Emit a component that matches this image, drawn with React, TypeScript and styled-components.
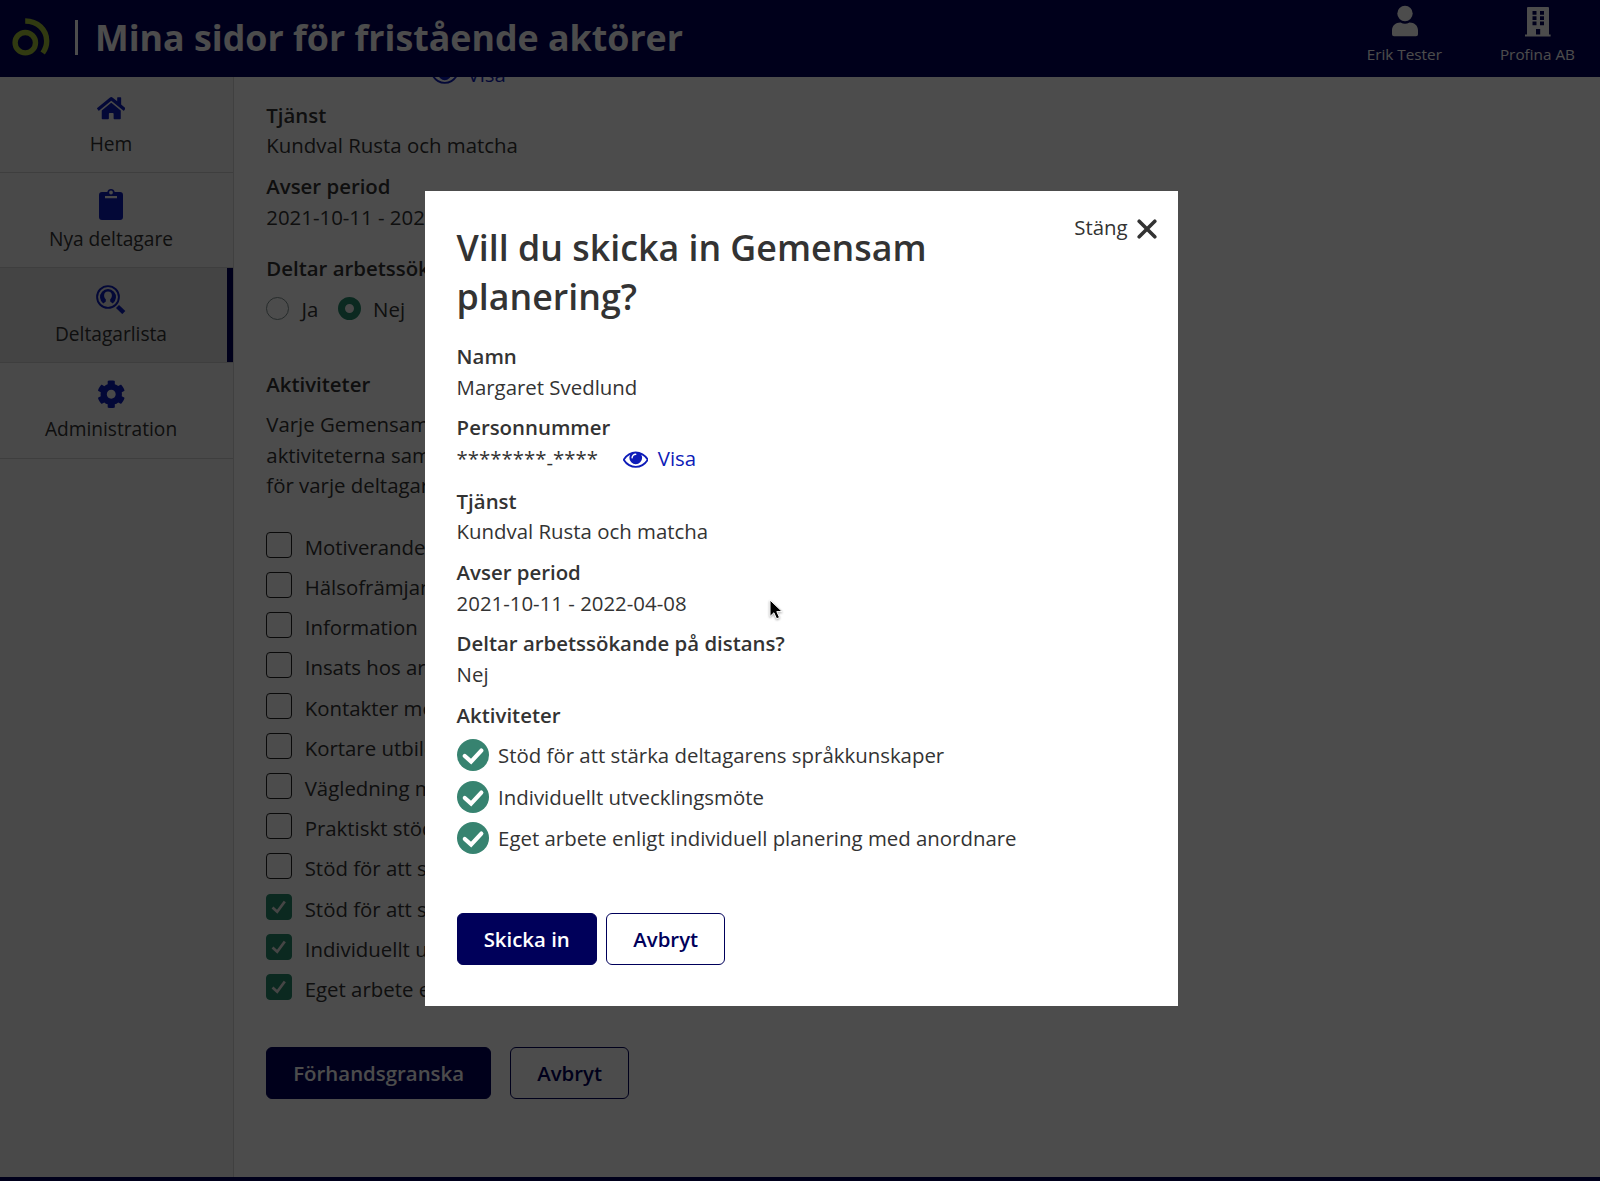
import React from "react";
import styled, { createGlobalStyle, css } from "styled-components";
import { FaHome, FaCog } from "react-icons/fa";

const GlobalStyle = createGlobalStyle`
  *, *::before, *::after { box-sizing: border-box; }
  html, body { margin: 0; padding: 0; }
  body {
    font-family: "Open Sans", "Noto Sans", sans-serif;
    font-size: 20.4px;
    line-height: 30.6px;
    color: #333;
    overflow: hidden;
  }
  h1, h2, h3, p, ul { margin: 0; padding: 0; }
  ul { list-style: none; }
  button { font: inherit; color: inherit; cursor: pointer; margin: 0; }
`;

const navy = "#00005a";
const link = "#0d1bb8";
const green = "#378370";
const formGreen = "#268a6b";

const Page = styled.div`
  position: relative;
  display: flex;
  flex-direction: column;
  height: 1181px;
  background: #fff;
  overflow: hidden;
`;

const Header = styled.header`
  position: relative;
  z-index: 1;
  flex: none;
  display: flex;
  align-items: flex-start;
  height: 77px;
  padding: 0 25px 0 12px;
  background: ${navy};
  color: #fff;
`;

const LogoSvg = styled.svg`
  width: 38px;
  height: 38px;
  margin-top: 18px;
`;

const Divider = styled.span`
  width: 3px;
  height: 35px;
  margin: 20px 17.5px 0 24.5px;
  background: #fff;
`;

const SiteTitle = styled.h1`
  flex: 1;
  margin-top: 10px;
  font-size: 35.75px;
  line-height: 54px;
  font-weight: 700;
  white-space: nowrap;
`;

const HeaderLinks = styled.div`
  display: flex;
  gap: 58px;
  padding-top: 5px;
`;

const HeaderLink = styled.a`
  display: flex;
  flex-direction: column;
  align-items: center;
  gap: 6px;
  font-size: 15.3px;
  line-height: 22px;
  white-space: nowrap;
  svg { width: 34px; height: 34px; display: block; margin: 0 0 -2px 1px; }
`;

const Body = styled.div`
  flex: 1;
  min-height: 0;
  display: flex;
`;

const Sidebar = styled.nav`
  flex: none;
  width: 234px;
  padding-top: 0.6px;
  background: #f4f4f4;
  border-right: 1px solid #d8d8d8;
`;

const NavItem = styled.a<{ $active?: boolean }>`
  display: flex;
  flex-direction: column;
  align-items: center;
  height: 95.3px;
  padding: 15px 11px 0 0;
  border-bottom: 1px solid #cfcfcf;
  background: ${(p) => (p.$active ? "#e3e3e3" : "transparent")};
  box-shadow: ${(p) => (p.$active ? `inset -6px 0 0 ${navy}` : "none")};
  font-size: 19.15px;
`;

const NavIcon = styled.span`
  display: flex;
  align-items: center;
  justify-content: center;
  height: 32px;
  margin-bottom: 4px;
  color: ${link};
`;

const Main = styled.main`
  flex: 1;
  min-width: 0;
  padding-left: 32.3px;
  overflow: hidden;
`;

const Form = styled.div`
  margin-top: -18.2px;
`;

const Field = styled.div`
  margin-bottom: 10.1px;
`;

const NumberField = styled.div`
  display: flex;
  height: 32.6px;
  margin-bottom: 8.4px;
  padding-left: 166.2px;
`;

const Label = styled.h3`
  font-size: inherit;
  line-height: inherit;
  font-weight: 600;
`;

const MaskedRow = styled.div`
  display: flex;
  height: 32.6px;
`;

const Stars = styled.span`
  width: 166.2px;
`;

const LowDash = styled.span`
  line-height: 0;
  vertical-align: -4px;
`;

const ShowLink = styled.span`
  display: flex;
  gap: 9.5px;
  color: ${link};
  svg { width: 25.5px; height: 25.5px; margin-top: 2.8px; }
`;

const RadioRow = styled.div`
  display: flex;
  margin: 9.8px 0 45px;
`;

const RadioSection = styled.div`
  padding-top: 10.8px;
`;

const RadioLabel = styled.label<{ $width: number }>`
  display: flex;
  align-items: flex-start;
  gap: 12.3px;
  width: ${(p) => p.$width}px;
`;

const Radio = styled.span<{ $on?: boolean }>`
  flex: none;
  width: 23px;
  height: 23px;
  margin-top: 3.2px;
  border-radius: 50%;
  ${(p) =>
    p.$on
      ? css`border: 7.5px solid ${formGreen}; background: #f2f2f2;`
      : css`border: 1.3px solid #7f8f8f;`}
`;

const Intro = styled.p`
  margin: 9.4px 0 30.7px;
`;

const CheckList = styled.ul`
  display: flex;
  flex-direction: column;
  gap: 9.65px;
`;

const CheckRow = styled.li`
  display: flex;
  gap: 12.4px;
  height: 30.6px;
  white-space: nowrap;
`;

const Box = styled.span<{ $on?: boolean }>`
  flex: none;
  width: 26px;
  height: 26px;
  margin-top: 0;
  border-radius: 4px;
  border: 1.4px solid ${(p) => (p.$on ? formGreen : "#222")};
  background: ${(p) => (p.$on ? formGreen : "transparent")};
  svg { display: block; width: 26px; height: 26px; margin: -1px; }
`;

const Buttons = styled.div<{ $gap: number; $top: number }>`
  display: flex;
  gap: ${(p) => p.$gap}px;
  margin-top: ${(p) => p.$top}px;
`;

const Button = styled.button<{ $primary?: boolean; $width: number }>`
  width: ${(p) => p.$width}px;
  height: 52.4px;
  padding: 1px 0 0;
  border: 1.3px solid ${navy};
  border-radius: 6px;
  background: ${(p) => (p.$primary ? navy : "transparent")};
  color: ${(p) => (p.$primary ? "#fff" : navy)};
  font-weight: 600;
`;

const Footer = styled.footer`
  flex: none;
  height: 3.7px;
  background: ${navy};
`;

const Overlay = styled.div`
  position: absolute;
  inset: 0;
  z-index: 2;
  padding: 191px 0 0 424.5px;
  background: rgba(0, 0, 0, 0.7);
`;

const Dialog = styled.section`
  width: 753.3px;
  height: 814.5px;
  padding: 32.3px 21.2px 0 32.1px;
  background: #fff;
`;

const DialogHead = styled.div`
  display: flex;
  justify-content: space-between;
  align-items: flex-start;
  margin-bottom: 20.5px;
`;

const DialogTitle = styled.h2`
  font-size: 35.75px;
  line-height: 48.65px;
  font-weight: 600;
`;

const Close = styled.button`
  display: flex;
  align-items: center;
  gap: 9px;
  margin-top: -11px;
  padding: 0;
  border: 0;
  background: none;
  svg { width: 20px; height: 20px; margin-top: 2px; }
`;

const DoneList = styled.ul`
  display: flex;
  flex-direction: column;
  gap: 9.5px;
  margin-top: 9px;
`;

const DoneRow = styled.li`
  display: flex;
  align-items: center;
  gap: 9.5px;
  height: 32px;
  line-height: 32.4px;
  svg { flex: none; width: 32px; height: 32px; }
`;

const DoneText = styled.span`
  padding-top: 1px;
`;

const Pointer = styled.svg`
  position: absolute;
  z-index: 3;
  left: 768px;
  top: 598px;
  width: 18px;
  height: 25px;
  filter: drop-shadow(0 1px 1px rgba(0, 0, 0, 0.35));
`;

const Logo = () => (
  <LogoSvg viewBox="0 0 38 38" fill="none" stroke="#a3c13a" strokeWidth="5.4">
    <circle cx="13.3" cy="24.7" r="10.2" />
    <path d="M13.2 3C25.5 3 34.7 11.8 34.7 23c0 4.600-1.500 8.600-4 12" />
  </LogoSvg>
);

const UserIcon = () => (
  <svg viewBox="0 0 34 34" fill="currentColor">
    <circle cx="17" cy="8.500" r="7.700" />
    <path d="M12.500 17.600c3 1.600 6 1.600 9 0 5 0 8.500 3 8.500 8V29.200a2 2 0 0 1-2 2H6a2 2 0 0 1-2-2V25.600c0-5 3.500-8 8.500-8z" />
  </svg>
);

const BuildingIcon = () => (
  <svg viewBox="0 0 34 34" fill="currentColor" fillRule="evenodd">
    <path d="M7 2h20a1 1 0 0 1 1 1v26.500h1.600V31.500H4V29.500h2V3a1 1 0 0 1 1-1zM11.500 6v3.800h4V6zM19 6v3.800h4V6zM11.500 11.200v3.800h4v-3.800zM19 11.200v3.800h4v-3.800zM11.500 16.500v3.800h4v-3.800zM19 16.500v3.800h4v-3.800zM15 24v5.500h4.200V24z" />
  </svg>
);

const ClipboardIcon = () => (
  <svg width="24" height="32" viewBox="0 0 24 32" fill="currentColor" fillRule="evenodd">
    <path d="M3 4h5.300a3.800 3.800 0 0 1 7.400 0H21a3 3 0 0 1 3 3v22a3 3 0 0 1-3 3H3a3 3 0 0 1-3-3V7a3 3 0 0 1 3-3zM12 2.600a1.900 1.900 0 1 0 0 3.800 1.900 1.900 0 0 0 0-3.800zM6 8v2.300h12V8z" />
  </svg>
);

const SearchUserIcon = () => (
  <svg width="30" height="29" viewBox="0 0 30 29" fill="none">
    <circle cx="12" cy="12" r="10.900" stroke="currentColor" strokeWidth="1.900" />
    <path
      fill="currentColor"
      d="M7.300 18.500A8 8 0 1 1 16.700 18.500L14.200 16.400V14.300C15.400 13.300 15.900 12 15.900 10.300 15.900 8 14.300 6.600 12 6.600S8.100 8 8.100 10.300c0 1.700.5 3 1.700 4v2.100z"
    />
    <path d="M21.500 21.500l6.300 6" stroke="currentColor" strokeWidth="4.400" />
  </svg>
);

const EyeIcon = () => (
  <svg viewBox="0 0 1792 1792" fill="currentColor">
    <path d="M1664 960q-152-236-381-353 61 104 61 225 0 185-131.500 316.500t-316.500 131.500-316.500-131.500-131.500-316.500q0-121 61-225-229 117-381 353 133 205 333.500 326.500t434.500 121.500 434.500-121.500 333.500-326.500zm-720-384q0-20-14-34t-34-14q-125 0-214.500 89.500t-89.500 214.500q0 20 14 34t34 14 34-14 14-34q0-86 61-147t147-61q20 0 34-14t14-34zm848 384q0 34-20 69-140 230-376.500 368.500t-499.500 138.500-499.500-139-376.500-368q-20-35-20-69t20-69q140-229 376.500-368t499.500-139 499.500 139 376.500 368q20 35 20 69z" />
  </svg>
);

const DoneIcon = () => (
  <svg viewBox="0 0 32 32">
    <circle cx="16" cy="16" r="16" fill={green} />
    <path d="M7.800 17l6.300 5.600L24.300 11.600" fill="none" stroke="#fff" strokeWidth="4.200" strokeLinecap="round" />
  </svg>
);

const TickIcon = () => (
  <svg viewBox="0 0 26 26" fill="none" stroke="#e6e6e6" strokeWidth="2.700">
    <path d="M6.500 13.500l4.700 4.200L18.800 7.500" />
  </svg>
);

const CloseIcon = () => (
  <svg viewBox="0 0 20 20" stroke="currentColor" strokeWidth="3.600" strokeLinecap="round">
    <path d="M2.200 2.200l15.600 15.600M17.800 2.200L2.200 17.800" />
  </svg>
);

const ShowNumber = () => (
  <ShowLink>
    <EyeIcon />
    Visa
  </ShowLink>
);

const ValueField = ({ label, value }: { label: string; value: string }) => (
  <Field>
    <Label>{label}</Label>
    <div>{value}</div>
  </Field>
);

const options: { text: string; on?: boolean }[] = [
  { text: "Motiverande" },
  { text: "Hälsofrämjande" },
  { text: "Information" },
  { text: "Insats hos arbetsgivare" },
  { text: "Kontakter med" },
  { text: "Kortare utbildning" },
  { text: "Vägledning mot" },
  { text: "Praktiskt stöd" },
  { text: "Stöd för att stärka" },
  { text: "Stöd för att stärka", on: true },
  { text: "Individuellt utvecklingsmöte", on: true },
  { text: "Eget arbete enligt", on: true },
];

const done = [
  "Stöd för att stärka deltagarens språkkunskaper",
  "Individuellt utvecklingsmöte",
  "Eget arbete enligt individuell planering med anordnare",
];

export default function App() {
  return (
    <Page>
      <GlobalStyle />
      <Header>
        <Logo />
        <Divider />
        <SiteTitle>Mina sidor för fristående aktörer</SiteTitle>
        <HeaderLinks>
          <HeaderLink>
            <UserIcon />
            Erik Tester
          </HeaderLink>
          <HeaderLink>
            <BuildingIcon />
            Profina AB
          </HeaderLink>
        </HeaderLinks>
      </Header>
      <Body>
        <Sidebar>
          <NavItem>
            <NavIcon><FaHome size={28.5} /></NavIcon>
            Hem
          </NavItem>
          <NavItem>
            <NavIcon><ClipboardIcon /></NavIcon>
            Nya deltagare
          </NavItem>
          <NavItem $active>
            <NavIcon><SearchUserIcon /></NavIcon>
            Deltagarlista
          </NavItem>
          <NavItem>
            <NavIcon><FaCog size={28.5} /></NavIcon>
            Administration
          </NavItem>
        </Sidebar>
        <Main>
          <Form>
            <NumberField>
              <ShowNumber />
            </NumberField>
            <ValueField label="Tjänst" value="Kundval Rusta och matcha" />
            <ValueField label="Avser period" value="2021-10-11 - 2022-04-08" />
            <RadioSection>
              <Label>Deltar arbetssökande på distans?</Label>
              <RadioRow>
                <RadioLabel $width={71.5}><Radio />Ja</RadioLabel>
                <RadioLabel $width={80}><Radio $on />Nej</RadioLabel>
              </RadioRow>
            </RadioSection>
            <Label>Aktiviteter</Label>
            <Intro>
              Varje Gemensam planering
              <br />
              aktiviteterna samt
              <br />
              för varje deltagare
            </Intro>
            <CheckList>
              {options.map((o, i) => (
                <CheckRow key={i}>
                  <Box $on={o.on}>{o.on && <TickIcon />}</Box>
                  {o.text}
                </CheckRow>
              ))}
            </CheckList>
            <Buttons $gap={19.3} $top={42}>
              <Button $primary $width={224.7}>Förhandsgranska</Button>
              <Button $width={118.7}>Avbryt</Button>
            </Buttons>
          </Form>
        </Main>
      </Body>
      <Footer />
      <Overlay>
        <Dialog role="dialog">
          <DialogHead>
            <DialogTitle>
              Vill du skicka in Gemensam
              <br />
              planering?
            </DialogTitle>
            <Close>
              Stäng
              <CloseIcon />
            </Close>
          </DialogHead>
          <ValueField label="Namn" value="Margaret Svedlund" />
          <Field>
            <Label>Personnummer</Label>
            <MaskedRow>
              <Stars>
                ********<LowDash>-</LowDash>****
              </Stars>
              <ShowNumber />
            </MaskedRow>
          </Field>
          <ValueField label="Tjänst" value="Kundval Rusta och matcha" />
          <ValueField label="Avser period" value="2021-10-11 - 2022-04-08" />
          <ValueField label="Deltar arbetssökande på distans?" value="Nej" />
          <Label>Aktiviteter</Label>
          <DoneList>
            {done.map((t) => (
              <DoneRow key={t}>
                <DoneIcon />
                <DoneText>{t}</DoneText>
              </DoneRow>
            ))}
          </DoneList>
          <Buttons $gap={9.5} $top={58.4}>
            <Button $primary $width={140.3}>Skicka in</Button>
            <Button $width={118.7}>Avbryt</Button>
          </Buttons>
        </Dialog>
      </Overlay>
      <Pointer viewBox="0 0 18 25">
        <path d="M2 2v16.500l3.900-3.700 2.700 6 2.900-1.300-2.700-5.900h5.300z" fill="#000" stroke="#fff" strokeWidth="1" />
      </Pointer>
    </Page>
  );
}
